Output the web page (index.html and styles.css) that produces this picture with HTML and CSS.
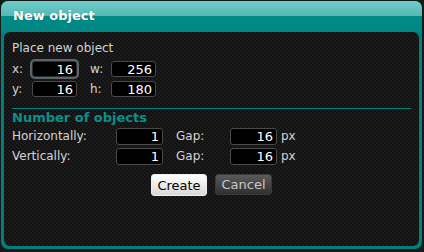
FILE: index.html
```html
<!DOCTYPE html>
<html lang="en">
<head>
  <meta charset="UTF-8">
  <title>New object</title>
  <link rel="stylesheet" href="styles.css">
</head>
<body>
  <div class="window">
    <div class="titlebar">New object</div>
    <div class="panel">
      <div class="caption">Place new object</div>
      <div class="row">
        <span class="lbl lbl-xy">x:</span><input class="num focused" value="16">
        <span class="lbl lbl-wh">w:</span><input class="num" value="256">
      </div>
      <div class="row">
        <span class="lbl lbl-xy">y:</span><input class="num" value="16">
        <span class="lbl lbl-wh">h:</span><input class="num" value="180">
      </div>

      <hr>
      <div class="section">Number of objects</div>
      <div class="row tall">
        <span class="lbl lbl-dir">Horizontally:</span><input class="num" value="1">
        <span class="lbl lbl-gap">Gap:</span><input class="num" value="16">
        <span class="unit">px</span>
      </div>
      <div class="row tall">
        <span class="lbl lbl-dir">Vertically:</span><input class="num" value="1">
        <span class="lbl lbl-gap">Gap:</span><input class="num" value="16">
        <span class="unit">px</span>
      </div>

      <div class="buttons">
        <button class="btn btn-ok">Create</button>
        <button class="btn btn-cancel">Cancel</button>
      </div>
    </div>
  </div>
</body>
</html>
```

FILE: styles.css
```css
body {
  margin: 0;
  background: #161a16;
  font-family: "DejaVu Sans", sans-serif;
  font-size: 12px;
  color: #d4d4d4;
}
.window {
  margin: 1px 2px 2px 1px;
  height: 248px;
  box-sizing: border-box;
  background: #007f7c;
  border-radius: 7px;
  padding: 0 3px 3px 3px;
  display: flex;
  flex-direction: column;
}
.titlebar {
  height: 31px;
  margin: 0 -3px;
  border-radius: 7px 7px 0 0;
  background: linear-gradient(#6fcecb, #56b7b3 48%, #008a87 50%, #008784);
  color: #fff;
  font-weight: bold;
  font-size: 13px;
  line-height: 30px;
  padding-left: 12px;
  text-shadow: 0 0 1px rgba(0, 0, 0, 0.3);
}
.panel {
  flex: 1;
  border-radius: 6px;
  background: repeating-conic-gradient(#1b1b1b 0 25%, #121212 0 50%) 0 0 / 4px 4px;
  padding: 9px 8px 0 8px;
}
.caption {
  line-height: 15px;
  margin-bottom: 3px;
}
.row {
  display: flex;
  align-items: center;
  height: 20px;
}
.lbl {
  display: inline-block;
}
.lbl-xy { width: 20px; }
.lbl-wh { width: 21px; margin-left: 13px; }
.lbl-dir { width: 104px; }
.lbl-gap { width: 54px; margin-left: 13px; }
.unit { margin-left: 4px; }
.num {
  width: 45px;
  height: 16px;
  box-sizing: border-box;
  background: #000;
  border: 1px solid #4a4a4a;
  border-radius: 3px;
  color: #fff;
  font-family: "DejaVu Sans", sans-serif;
  font-size: 13px;
  line-height: 14px;
  text-align: right;
  padding: 0 3px 0 0;
  margin: 0;
  outline: none;
}
.tall .num {
  height: 17px;
  width: 47px;
}
.num.focused {
  border-color: #2a2e33;
  box-shadow: 0 0 0 2px #5d646c;
}
hr {
  border: none;
  border-top: 1px solid #00807d;
  margin: 9px 0 1px 0;
}
.section {
  color: #0a8f8b;
  font-weight: bold;
  font-size: 13px;
  line-height: 16px;
}
.buttons {
  display: flex;
  justify-content: center;
  gap: 8px;
  margin-top: 8px;
}
.btn {
  width: 56px;
  height: 21px;
  border-radius: 3px;
  font-family: "DejaVu Sans", sans-serif;
  font-size: 13px;
  padding: 0;
}
.btn-ok {
  height: 22px;
  background: linear-gradient(#ffffff, #d8d8d8);
  border: 1px solid #eee;
  color: #000;
}
.btn-cancel {
  width: 57px;
  background: linear-gradient(#5a5a5a, #303030);
  border: 1px solid #3a3a3a;
  color: #c8c8c8;
}
```
